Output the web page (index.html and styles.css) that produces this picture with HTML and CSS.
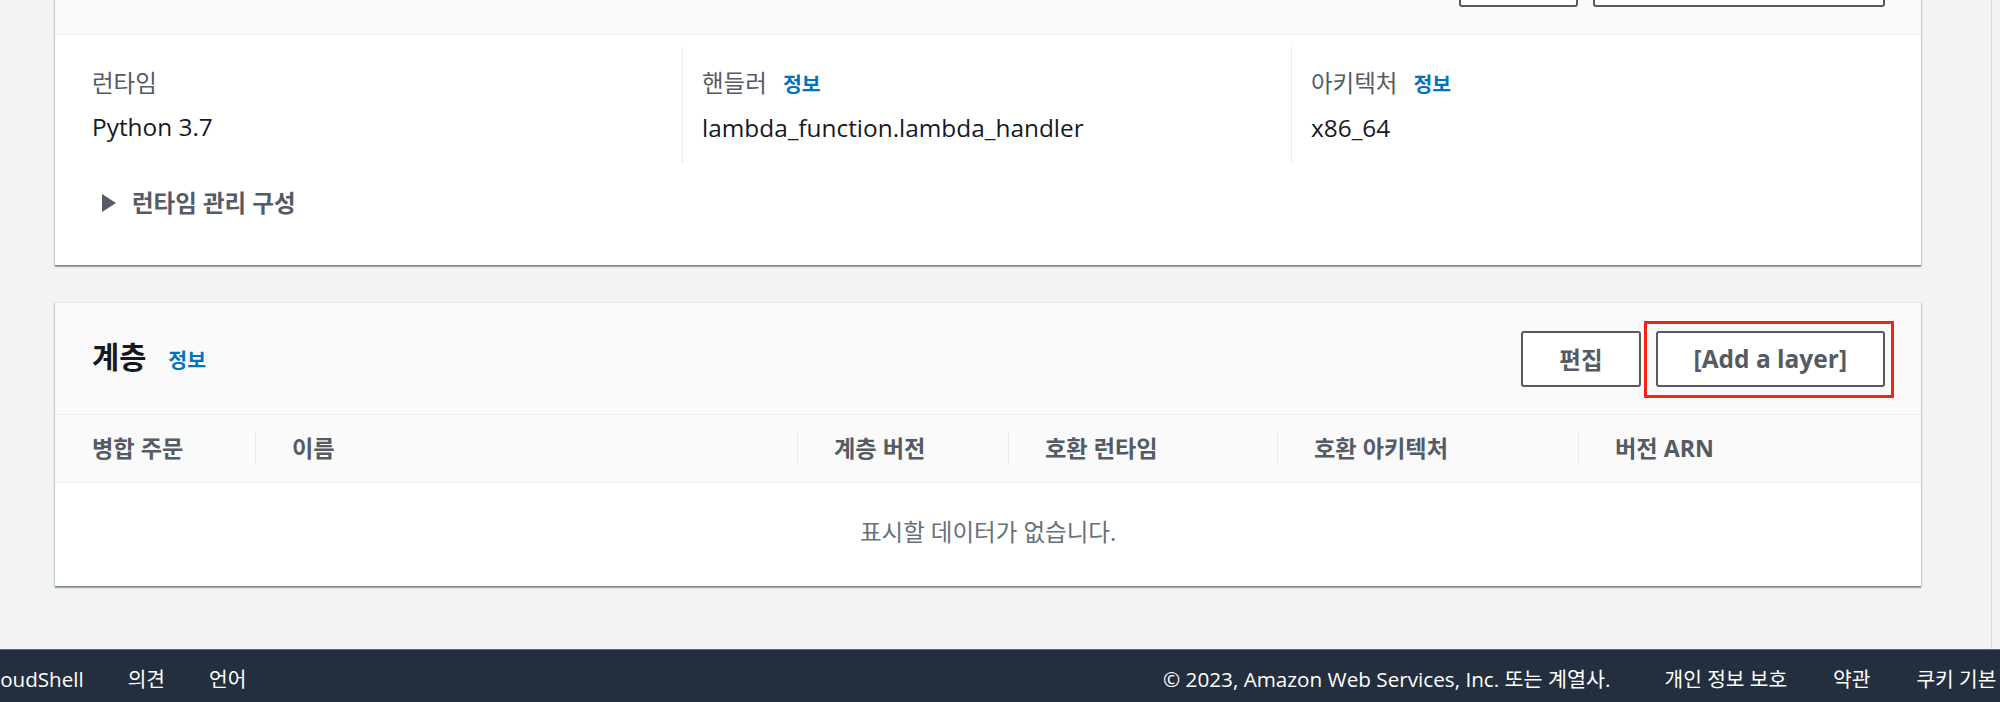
FILE: index.html
```html
<!DOCTYPE html>
<html lang="ko">
<head>
<meta charset="utf-8">
<title>Lambda - 런타임 설정 / 계층</title>
<link rel="stylesheet" href="styles.css">
</head>
<body>
<div class="app">
  <div class="shell">
    <main class="main">
      <section class="card">
        <header class="card-head">
          <div class="head-title">
            <h2 class="title">런타임 설정</h2>
            <a class="info" href="#">정보</a>
          </div>
          <div class="actions">
            <button class="btn btn-ko" type="button">편집</button>
            <button class="btn btn-ko btn-wide" type="button">런타임 관리 구성 편집</button>
          </div>
        </header>
        <div class="card-body">
          <div class="columns">
            <div class="col">
              <div class="label">런타임</div>
              <div class="value">Python 3.7</div>
            </div>
            <div class="col col-div">
              <div class="label">핸들러<a class="info" href="#">정보</a></div>
              <div class="value">lambda_function.lambda_handler</div>
            </div>
            <div class="col col-div">
              <div class="label">아키텍처<a class="info" href="#">정보</a></div>
              <div class="value">x86_64</div>
            </div>
          </div>
          <div class="expander">
            <svg class="caret" width="14" height="18" viewBox="0 0 14 18" aria-hidden="true"><polygon points="0,0 14,9 0,18" fill="#545b64"/></svg>
            <span>런타임 관리 구성</span>
          </div>
        </div>
      </section>

      <section class="card card-layers">
        <header class="card-head">
          <div class="head-title">
            <h2 class="title">계층</h2>
            <a class="info" href="#">정보</a>
          </div>
          <div class="actions">
            <button class="btn btn-ko" type="button">편집</button>
            <div class="highlight">
              <button class="btn btn-en" type="button">[Add a layer]</button>
            </div>
          </div>
        </header>
        <table class="layers-table">
          <thead>
            <tr>
              <th class="c1"><div class="th-cell th-first">병합 주문</div></th>
              <th class="c2"><div class="th-cell">이름</div></th>
              <th class="c3"><div class="th-cell">계층 버전</div></th>
              <th class="c4"><div class="th-cell">호환 런타임</div></th>
              <th class="c5"><div class="th-cell">호환 아키텍처</div></th>
              <th class="c6"><div class="th-cell">버전 ARN</div></th>
            </tr>
          </thead>
          <tbody>
            <tr>
              <td class="empty" colspan="6">표시할 데이터가 없습니다.</td>
            </tr>
          </tbody>
        </table>
      </section>
    </main>
    <div class="rail"></div>
  </div>

  <footer class="footer">
    <nav class="foot-left">
      <a class="foot-en" href="#">CloudShell</a>
      <a class="foot-ko" href="#">의견</a>
      <a class="foot-ko" href="#">언어</a>
    </nav>
    <nav class="foot-right">
      <span class="copyright">© 2023, Amazon Web Services, Inc. 또는 계열사.</span>
      <a class="foot-ko" href="#">개인 정보 보호</a>
      <a class="foot-ko" href="#">약관</a>
      <a class="foot-ko" href="#">쿠키 기본 설정</a>
    </nav>
  </footer>
</div>
</body>
</html>
```
FILE: styles.css
```css
* {
  box-sizing: border-box;
}

html, body {
  margin: 0;
  padding: 0;
}

body {
  font-family: "Open Sans", "Noto Sans CJK KR", sans-serif;
  color: #16191f;
  background: #f2f3f3;
}

a {
  text-decoration: none;
}

.app {
  width: 2000px;
  height: 702px;
  display: flex;
  flex-direction: column;
  overflow: hidden;
}

.shell {
  flex: 1;
  display: flex;
  min-height: 0;
}

.main {
  width: 1991px;
  padding: 0 70px 0 55px;
  overflow: hidden;
}

.rail {
  flex: 1;
  border-left: 1px solid #d5dbdb;
  background: #f2f3f3;
}

/* cards */
.card {
  background: #ffffff;
  border-top: 1px solid #eaeded;
  box-shadow: 0 2px 1px 0 rgba(0, 28, 36, 0.3), 1px 1px 1px 0 rgba(0, 28, 36, 0.15), -1px 1px 1px 0 rgba(0, 28, 36, 0.15);
}

.card:first-child {
  margin-top: -78px;
}

.card-layers {
  margin-top: 37px;
}

.card-head {
  height: 112px;
  display: flex;
  align-items: center;
  justify-content: space-between;
  padding: 0 36px 0 37px;
  background: #fafafa;
  border-bottom: 1px solid #eaeded;
}

.head-title {
  display: flex;
  align-items: baseline;
  gap: 22px;
  margin-bottom: 4px;
}

.title {
  margin: 0;
  font-size: 29.5px;
  line-height: 38px;
  font-weight: 700;
  color: #16191f;
}

.info {
  font-size: 20.5px;
  font-weight: 700;
  color: #0073bb;
}

.actions {
  display: flex;
  align-items: center;
  gap: 15px;
}

.btn {
  height: 56px;
  padding: 0 36px;
  border: 2px solid #545b64;
  border-radius: 3px;
  background: #ffffff;
  color: #545b64;
  font-family: inherit;
  font-weight: 700;
  white-space: nowrap;
  cursor: pointer;
}

.btn-ko {
  font-size: 23.5px;
}

.btn-wide {
  font-size: 23.8px;
}

.btn-en {
  font-size: 24.5px;
}

.highlight {
  position: relative;
  display: flex;
}

.highlight::after {
  content: "";
  position: absolute;
  top: -10px;
  right: -9px;
  bottom: -11px;
  left: -12px;
  border: 3px solid #f5240f;
  pointer-events: none;
}

/* runtime settings body */
.card-body {
  padding: 11px 37px 47px 37px;
}

.columns {
  display: grid;
  grid-template-columns: 590px 609px 1fr;
}

.col {
  padding: 22px 0 20px 0;
}

.col-div {
  border-left: 1px solid #eaeded;
  padding-left: 19px;
}

.label {
  font-size: 23.5px;
  line-height: 30px;
  color: #545b64;
  margin-bottom: 13px;
}

.label .info {
  margin-left: 16px;
}

.value {
  font-size: 24.4px;
  line-height: 32px;
  color: #16191f;
}

.expander {
  margin-top: 24px;
  padding-left: 10px;
  display: flex;
  align-items: center;
  gap: 16px;
  font-size: 23.5px;
  line-height: 30px;
  font-weight: 700;
  color: #545b64;
}

.caret {
  display: block;
}

/* layers table */
.layers-table {
  width: 100%;
  border-collapse: separate;
  border-spacing: 0;
  table-layout: fixed;
}

.layers-table th {
  height: 68px;
  padding: 0;
  background: #fafafa;
  border-bottom: 1px solid #eaeded;
  text-align: left;
  vertical-align: middle;
  font-size: 23.2px;
  font-weight: 700;
  color: #545b64;
}

.c1 { width: 200px; }
.c2 { width: 542px; }
.c3 { width: 211px; }
.c4 { width: 269px; }
.c5 { width: 301px; }

.th-cell {
  height: 35px;
  line-height: 35px;
  border-left: 1px solid #eaeded;
  padding-left: 36px;
  white-space: nowrap;
}

.th-first {
  border-left: none;
  padding-left: 37px;
}

.empty {
  height: 103px;
  padding: 0 0 5px 0;
  text-align: center;
  vertical-align: middle;
  font-size: 23.5px;
  line-height: 30px;
  color: #687078;
}

/* footer */
.footer {
  height: 53px;
  flex: none;
  display: grid;
  grid-template-columns: 1163px 1fr;
  align-items: center;
  padding-top: 6px;
  background: #232f3e;
  border-top: 1px solid #5f6b7a;
  color: #ffffff;
  white-space: nowrap;
  overflow: hidden;
}

.footer a {
  color: #ffffff;
}

.foot-left {
  display: flex;
  align-items: center;
  gap: 44px;
  margin-left: -18px;
}

.foot-right {
  display: flex;
  align-items: center;
  gap: 46px;
}

.foot-en {
  font-size: 20.6px;
  line-height: 28px;
}

.foot-ko {
  font-size: 20.3px;
  line-height: 28px;
}

.copyright {
  font-size: 20.7px;
  line-height: 28px;
  margin-right: 8px;
}
```
